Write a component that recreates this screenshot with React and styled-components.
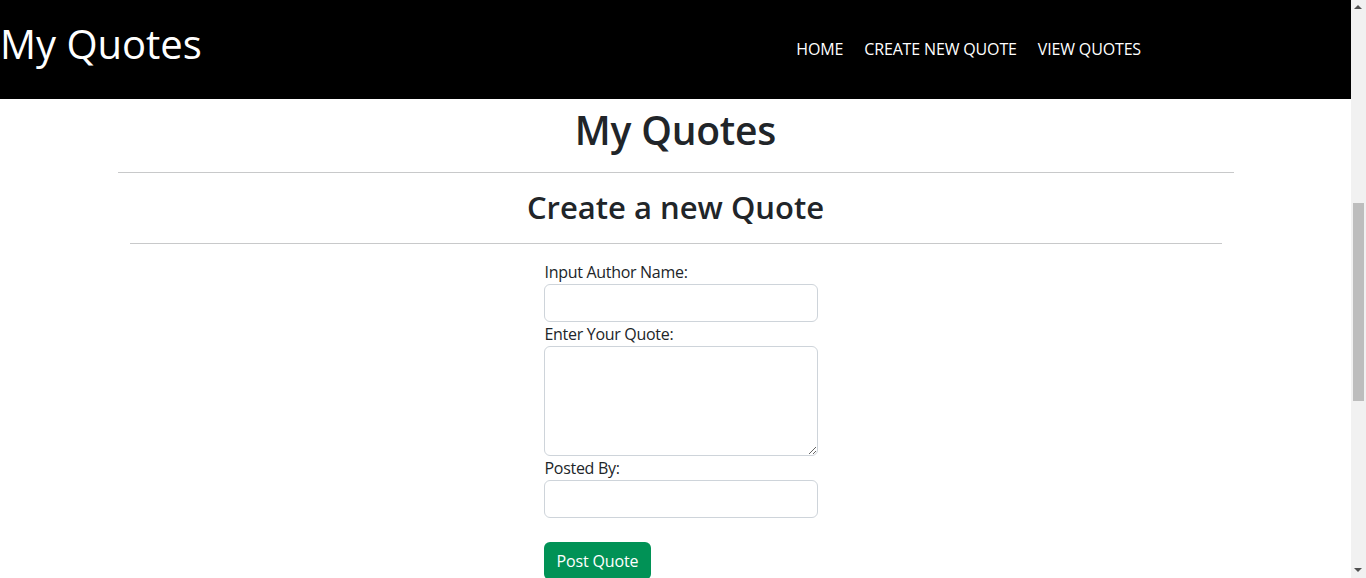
import React from "react";
import styled, { createGlobalStyle } from "styled-components";

const Global = createGlobalStyle`
  html, body { margin: 0; padding: 0; }
  html { overflow: hidden; }
  body {
    font-family: "Open Sans", "Noto Sans", sans-serif;
    color: #212529;
    background: #fff;
    line-height: 1.5;
  }
  * { box-sizing: border-box; }
`;

const Page = styled.div`
  width: calc(100% - 15px);
`;

const Header = styled.header`
  height: 99px;
  background: #000;
  display: flex;
  align-items: flex-start;
  justify-content: space-between;
`;

const Brand = styled.a`
  color: #fff;
  font-size: 40px;
  line-height: 1;
  padding-top: 24px;
  text-decoration: none;
`;

const Nav = styled.nav`
  display: flex;
  gap: 21px;
  padding-top: 38px;
  padding-right: 210px;
`;

const NavLink = styled.a`
  color: #fff;
  font-size: 16px;
  line-height: 22px;
  text-decoration: none;
  letter-spacing: -0.15px;
`;

const Container = styled.main`
  max-width: 1140px;
  margin: 0 auto;
  padding: 0 12px 60px;
`;

const Title = styled.h1`
  margin: 7px 0 0;
  text-align: center;
  font-size: 39px;
  font-weight: 600;
  line-height: 48px;
  letter-spacing: -0.2px;
`;

const Rule = styled.hr`
  margin: ${(p) => p.$mt}px 0 0;
  border: 0;
  border-top: 1px solid #c8c9ca;
`;

const Section = styled.section`
  padding: 0 12px;
`;

const Subtitle = styled.h2`
  margin: 15px 0 0;
  text-align: center;
  font-size: 31px;
  font-weight: 600;
  line-height: 38px;
`;

const Form = styled.form`
  width: 274px;
  margin: 16px 0 0 calc(50% - 132px);
  display: flex;
  flex-direction: column;
`;

const Label = styled.label`
  font-size: 16px;
  line-height: 24px;
  padding-left: 1px;
  letter-spacing: -0.3px;
`;

const Input = styled.input`
  display: block;
  width: 100%;
  height: 38px;
  border: 1px solid #ced4da;
  border-radius: 6px;
  font: inherit;
  padding: 6px 12px;
`;

const TextArea = styled.textarea`
  display: block;
  width: 100%;
  height: 110px;
  border: 1px solid #ced4da;
  border-radius: 6px;
  font: inherit;
  padding: 6px 12px;
`;

const Button = styled.button`
  align-self: flex-start;
  margin-top: 24px;
  height: 38px;
  padding: 0 13px;
  border: 0;
  border-radius: 6px;
  background: #019256;
  color: #fff;
  font-family: inherit;
  font-size: 16px;
  letter-spacing: -0.15px;
`;

const ScrollTrack = styled.div`
  position: fixed;
  top: 0;
  right: 0;
  width: 15px;
  height: 100vh;
  background: #f1f1f1;
`;

const Thumb = styled.div`
  position: absolute;
  left: 2px;
  right: 2px;
  top: 203px;
  height: 198px;
  background: #bdbdbd;
`;

const Arrow = styled.div`
  position: absolute;
  left: 3px;
  width: 0;
  height: 0;
  border-left: 4.5px solid transparent;
  border-right: 4.5px solid transparent;
  ${(p) =>
    p.$down
      ? "bottom: 6px; border-top: 4px solid #505050;"
      : "top: 5px; border-bottom: 4px solid #505050;"}
`;

export default function App() {
  return (
    <>
      <Global />
      <Page>
        <Header>
          <Brand href="#">My Quotes</Brand>
          <Nav>
            <NavLink href="#">HOME</NavLink>
            <NavLink href="#">CREATE NEW QUOTE</NavLink>
            <NavLink href="#">VIEW QUOTES</NavLink>
          </Nav>
        </Header>
        <Container>
          <Title>My Quotes</Title>
          <Rule $mt={18} />
          <Section>
            <Subtitle>Create a new Quote</Subtitle>
            <Rule $mt={17} />
            <Form onSubmit={(e) => e.preventDefault()}>
              <Label htmlFor="author">Input Author Name:</Label>
              <Input id="author" type="text" />
              <Label htmlFor="quote">Enter Your Quote:</Label>
              <TextArea id="quote" />
              <Label htmlFor="poster">Posted By:</Label>
              <Input id="poster" type="text" />
              <Button type="submit">Post Quote</Button>
            </Form>
          </Section>
        </Container>
      </Page>
      <ScrollTrack aria-hidden="true">
        <Arrow />
        <Thumb />
        <Arrow $down />
      </ScrollTrack>
    </>
  );
}
